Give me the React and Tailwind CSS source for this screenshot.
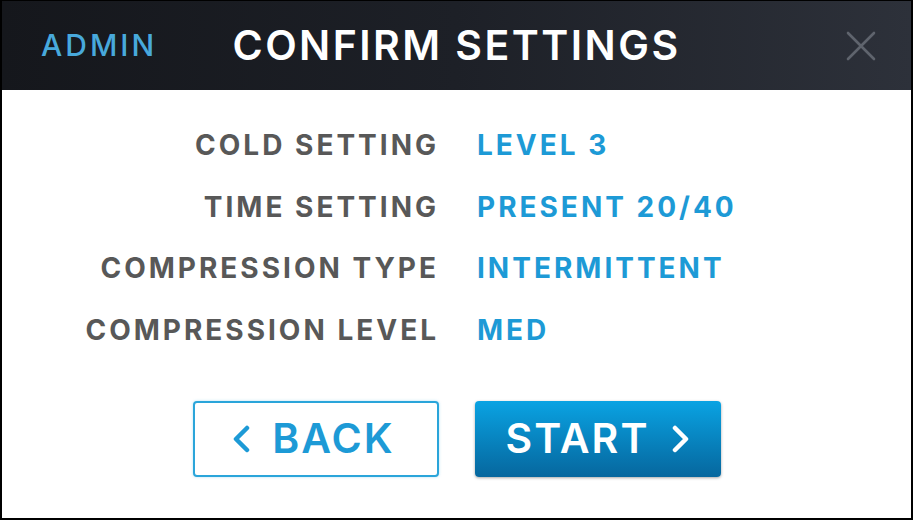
export default function App() {
  const rows = [
    ['COLD SETTING', 'LEVEL 3'],
    ['TIME SETTING', 'PRESENT 20/40'],
    ['COMPRESSION TYPE', 'INTERMITTENT'],
    ['COMPRESSION LEVEL', 'MED'],
  ]

  return (
    <div className="h-[520px] w-[913px] bg-black p-[2px] pt-px font-['Inter',sans-serif]">
      <div className="flex h-full flex-col bg-white">
        <header className="grid h-[89px] grid-cols-[1fr_auto_1fr] items-center bg-gradient-to-r from-[#15171c] via-[#1d2027] to-[#2d313a]">
          <span className="pl-[39px] text-[30px] font-medium tracking-[3px] text-[#48a9dc]">ADMIN</span>
          <h1 className="text-[41px] font-semibold tracking-[0.06em] text-white">CONFIRM SETTINGS</h1>
          <div className="flex justify-end pr-[34px]">
            <svg width="32" height="32" viewBox="0 0 32 32" className="text-[#5f646d]">
              <path d="M3 3 L29 29 M29 3 L3 29" stroke="currentColor" strokeWidth="2.6" strokeLinecap="round" />
            </svg>
          </div>
        </header>

        <div className="grid grid-cols-[437px_auto] gap-x-[38px] pt-[25px] text-[28px] font-bold leading-[61.7px] tracking-[3px]">
          {rows.map(([label, value]) => (
            <div key={label} className="contents">
              <span className="text-right text-[#585858]">{label}</span>
              <span className="text-[#1d9ad6]">{value}</span>
            </div>
          ))}
        </div>

        <div className="mt-[39px] flex justify-center gap-[36px]">
          <button className="flex h-[76px] w-[246px] items-center justify-center gap-[22px] rounded-[4px] border-2 border-[#2aa5da] bg-white text-[41px] font-semibold tracking-[0.05em] text-[#1d9ad6] shadow-[0_0_3px_rgba(42,165,218,0.35)]">
            <svg width="18" height="28" viewBox="0 0 18 28" className="-ml-[4px]">
              <path d="M15 3 L4 14 L15 25" fill="none" stroke="currentColor" strokeWidth="4.5" strokeLinecap="round" strokeLinejoin="round" />
            </svg>
            BACK
          </button>
          <button className="flex h-[76px] w-[246px] items-center justify-center gap-[22px] rounded-[4px] bg-gradient-to-b from-[#0aa3e3] to-[#06679e] text-[41px] font-semibold tracking-[0.05em] text-white shadow-[0_1px_3px_rgba(0,0,0,0.35)]">
            START
            <svg width="18" height="28" viewBox="0 0 18 28">
              <path d="M3 3 L14 14 L3 25" fill="none" stroke="currentColor" strokeWidth="4.5" strokeLinecap="round" strokeLinejoin="round" />
            </svg>
          </button>
        </div>
      </div>
    </div>
  )
}
